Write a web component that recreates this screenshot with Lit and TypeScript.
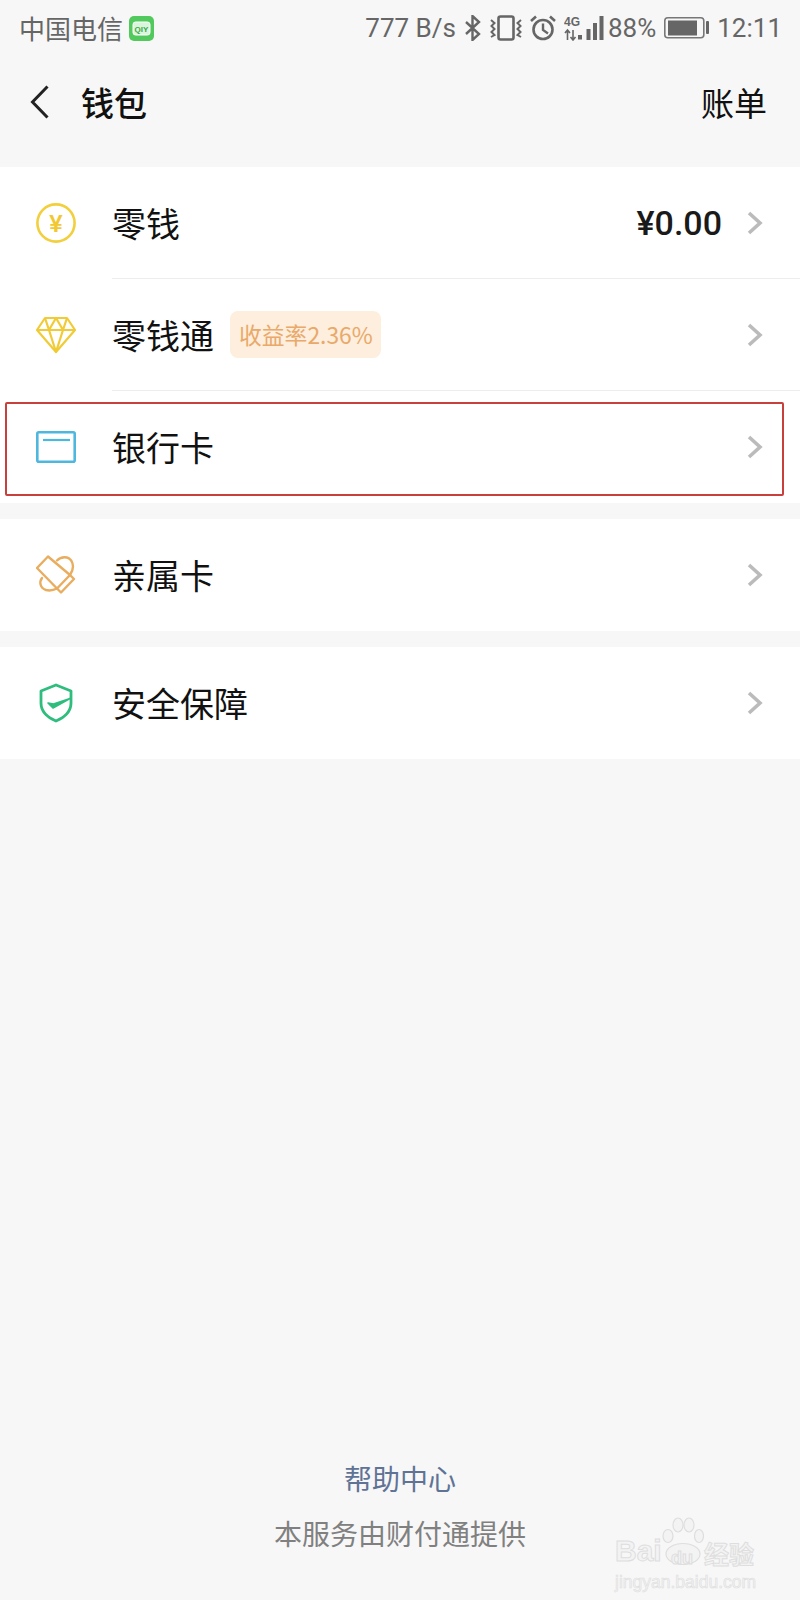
import { css, html, LitElement, nothing, svg } from "lit";
import { customElement } from "lit/decorators.js";

const chevron = html`<svg class="chevron" width="16" height="24" viewBox="0 0 16 24">
  <path d="M2 2l11 10L2 22" fill="none" stroke="#bbb" stroke-width="3.6" />
</svg>`;

const coinIcon = svg`
  <circle cx="20" cy="20" r="18.6" fill="none" stroke="#f2cf3c" stroke-width="2.6" />
  <text x="20" y="28.500" text-anchor="middle" font-family="Liberation Sans, sans-serif" font-weight="700" font-size="24" fill="#f2c832">¥</text>
`;

const diamondIcon = svg`
  <g fill="none" stroke="#f1cb36" stroke-width="2.2" stroke-linejoin="round">
    <path d="M9 2H31L39 14 20 36 1 14Z" />
    <path d="M1 14H39M13 14L20 36 27 14M9 2L13 14 20 2 27 14 31 2" />
  </g>
`;

const cardIcon = svg`
  <rect x="1.3" y="1.3" width="37.4" height="29.4" rx="1.5" fill="none" stroke="#4db7de" stroke-width="2.6" />
  <path d="M7 9H34" stroke="#4db7de" stroke-width="2.2" />
`;

const familyIcon = svg`
  <g fill="none" stroke="#e9ad5f" stroke-width="2.4" stroke-linejoin="round" stroke-linecap="round">
    <path d="M12 1.5L1 13 21 33.500 34 20Z" />
    <path d="M21 33.500L25 37.500 38 24 34 20" />
    <path d="M21 5.500C25 1.500 32 0.500 35.500 6 38 10.500 37 15.500 34 20" />
    <path d="M6 23C3 27 4 33 10 35 14 36 18 35 21 33.500" />
  </g>
`;

const shieldIcon = svg`
  <path d="M17 2L32 8V20C32 29 24 35 17 38 10 35 2 29 2 20V8Z" fill="none" stroke="#2fbd7e" stroke-width="2.8" stroke-linejoin="round" />
  <path d="M9 20L14 25 31 15.500 14.500 21Z" fill="#2fbd7e" stroke="#2fbd7e" stroke-width="1.6" stroke-linejoin="round" />
`;

const rows = [
  [{ icon: coinIcon, w: 40, h: 40, label: "零钱", amount: "¥0.00" },
   { icon: diamondIcon, w: 40, h: 38, label: "零钱通", badge: "收益率2.36%" },
   { icon: cardIcon, w: 40, h: 32, label: "银行卡" }],
  [{ icon: familyIcon, w: 40, h: 40, label: "亲属卡" }],
  [{ icon: shieldIcon, w: 34, h: 40, label: "安全保障" }],
];

@customElement("app-root")
export class AppRoot extends LitElement {
  static override styles = css`
    :host {
      display: block;
      height: 1600px;
      overflow: hidden;
      background: #f7f7f7;
      font-family: "Noto Sans CJK SC", "Liberation Sans", sans-serif;
      color: #111;
    }

    .page {
      position: relative;
      height: 1600px;
      display: flex;
      flex-direction: column;
    }

    .status {
      height: 56px;
      display: flex;
      align-items: center;
      justify-content: space-between;
      padding: 0 18px 0 19px;
      font-size: 26px;
      line-height: 56px;
      color: #666;
    }

    .status-left,
    .status-right {
      display: flex;
      align-items: center;
    }

    .status-left svg {
      margin-left: 6px;
    }

    .num {
      font-family: Roboto, "Liberation Sans", sans-serif;
      font-size: 26px;
    }

    .speed {
      margin-right: 9px;
    }

    .status-right svg {
      display: block;
    }

    .bt {
      margin-right: 9px;
    }

    .vib {
      margin-right: 8px;
    }

    .alarm {
      margin-right: 8px;
    }

    .sig {
      margin-right: 4px;
    }

    .batt {
      margin: 0 8px;
    }

    .header {
      height: 111px;
      box-sizing: border-box;
      display: flex;
      align-items: center;
      padding: 0 33px 19px 30px;
      font-size: 33px;
      line-height: 44px;
    }

    .back {
      margin-right: 32px;
    }

    .title {
      flex: 1;
      font-weight: 500;
    }

    .section {
      background: #fff;
      margin-bottom: 16px;
    }

    .row {
      height: 112px;
      display: flex;
      align-items: center;
    }

    .icon {
      width: 112px;
      flex: none;
      display: flex;
      justify-content: center;
    }

    .body {
      flex: 1;
      height: 100%;
      box-sizing: border-box;
      display: flex;
      align-items: center;
      padding-right: 37px;
      border-bottom: 1px solid #ededed;
    }

    .row:last-child .body {
      border-bottom: none;
    }

    .label {
      font-size: 34px;
      line-height: 44px;
      color: #111;
    }

    .badge {
      margin-left: 16px;
      height: 47px;
      padding: 0 8px 0 9px;
      display: flex;
      align-items: center;
      background: #fdeedd;
      border-radius: 8px;
      color: #e9a96a;
      font-size: 22.800px;
    }

    .amount {
      margin-left: auto;
      font-family: Roboto, "Liberation Sans", sans-serif;
      font-size: 34px;
      font-weight: 500;
      color: #1a1a1a;
    }

    .chevron {
      margin-left: auto;
    }

    .amount + .chevron {
      margin-left: 25px;
    }

    .footer {
      margin-top: auto;
      padding-bottom: 49px;
      display: flex;
      flex-direction: column;
      align-items: center;
      gap: 19px;
      font-size: 28px;
      line-height: 36px;
    }

    .help {
      color: #5f7396;
    }

    .provider {
      color: #808080;
    }

    /* selection box drawn over the bank card row */
    .mark {
      position: absolute;
      left: 5px;
      top: 402px;
      width: 775px;
      height: 90px;
      border: 2.500px solid #c8403c;
      border-radius: 2px;
    }

    .watermark {
      position: absolute;
      left: 615px;
      top: 1517px;
      width: 142px;
      color: #f3f3f3;
      -webkit-text-stroke: 1px #dedede;
      font-family: "Liberation Sans", sans-serif;
    }

    .wm-top {
      position: relative;
      display: flex;
      align-items: flex-end;
      height: 50px;
      font-size: 30px;
      line-height: 32px;
      font-weight: 700;
    }

    .wm-top svg {
      position: absolute;
      left: 47px;
      top: 0;
    }

    .wm-du {
      position: absolute;
      left: 56px;
      top: 31px;
      font-size: 18px;
      line-height: 20px;
    }

    .wm-cn {
      position: absolute;
      left: 89px;
      top: 22px;
      font-family: "Noto Sans CJK SC", sans-serif;
      font-size: 25px;
      line-height: 28px;
    }

    .wm-url {
      margin-top: 5px;
      font-size: 17.500px;
      line-height: 20px;
      white-space: nowrap;
      -webkit-text-stroke: 0.6px #dedede;
    }
  `;

  override render() {
    return html`
      <div class="page">
        <div class="status">
          <div class="status-left">
            <span>中国电信</span>
            <svg width="25" height="25" viewBox="0 0 25 25">
              <rect width="25" height="25" rx="5" fill="#52c95c" />
              <rect x="4" y="6" width="17" height="13" rx="2.500" fill="#d9f5db" stroke="#fff" />
              <text x="12.500" y="16" text-anchor="middle" font-family="Liberation Sans, sans-serif" font-size="8" font-weight="700" fill="#3aa845">QIY</text>
            </svg>
          </div>
          <div class="status-right">
            <span class="num speed">777 B/s</span>
            <svg class="bt" width="16" height="26" viewBox="0 0 16 26">
              <path d="M1 7L14 19 7.500 25V1L14 7 1 19" fill="none" stroke="#666" stroke-width="2.400" />
            </svg>
            <svg class="vib" width="32" height="26" viewBox="0 0 32 26">
              <rect x="8.500" y="1.500" width="15" height="23" rx="2" fill="none" stroke="#666" stroke-width="2.600" />
              <path d="M1 5L4.500 8 1.500 11 4.500 14 1.500 17 4.500 20 1 22M31 5L27.500 8 30.500 11 27.500 14 30.500 17 27.500 20 31 22" fill="none" stroke="#666" stroke-width="2" />
            </svg>
            <svg class="alarm" width="26" height="26" viewBox="0 0 26 26">
              <circle cx="13" cy="14.500" r="9.500" fill="none" stroke="#666" stroke-width="2.600" />
              <path d="M13 8.500V15L18 18.500" fill="none" stroke="#666" stroke-width="2.400" />
              <path d="M1 6L6 1.500M25 6L20 1.500" fill="none" stroke="#666" stroke-width="2.600" />
            </svg>
            <svg class="sig" width="40" height="26" viewBox="0 0 40 26">
              <text x="0" y="11" font-family="Liberation Sans, sans-serif" font-size="12" font-weight="700" fill="#666">4G</text>
              <path d="M3.500 25V15M1 18L3.500 15 6 18M9 15V25M6.500 22L9 25 11.500 22" fill="none" stroke="#666" stroke-width="1.600" />
              <rect x="14" y="20" width="4" height="4.500" fill="#666" />
              <rect x="22.500" y="14" width="4" height="11" fill="#666" />
              <rect x="29" y="8" width="4" height="17" fill="#666" />
              <rect x="35.500" y="1" width="4" height="24" fill="#666" />
            </svg>
            <span class="num">88%</span>
            <svg class="batt" width="45" height="22" viewBox="0 0 45 22">
              <rect x="0.800" y="0.800" width="39" height="20" rx="3" fill="none" stroke="#777" stroke-width="1.600" />
              <rect x="4" y="3.500" width="29" height="15" fill="#666" />
              <rect x="42" y="4" width="3" height="13" rx="1" fill="#666" />
            </svg>
            <span class="num">12:11</span>
          </div>
        </div>

        <div class="header">
          <svg class="back" width="19" height="34" viewBox="0 0 19 34">
            <path d="M17.500 1.500L2.500 17 17.500 32.500" fill="none" stroke="#222" stroke-width="3" />
          </svg>
          <span class="title">钱包</span>
          <span>账单</span>
        </div>

        ${rows.map(
          (group) => html`
            <div class="section">
              ${group.map(
                (r: any) => html`
                  <div class="row">
                    <div class="icon">
                      <svg width=${r.w} height=${r.h} viewBox="0 0 ${r.w} ${r.h}">${r.icon}</svg>
                    </div>
                    <div class="body">
                      <span class="label">${r.label}</span>
                      ${r.badge ? html`<span class="badge">${r.badge}</span>` : nothing}
                      ${r.amount ? html`<span class="amount">${r.amount}</span>` : nothing}
                      ${chevron}
                    </div>
                  </div>
                `
              )}
            </div>
          `
        )}

        <div class="footer">
          <span class="help">帮助中心</span>
          <span class="provider">本服务由财付通提供</span>
        </div>

        <div class="mark"></div>

        <div class="watermark">
          <div class="wm-top">
            <span>Bai</span>
            <svg width="42" height="48" viewBox="0 0 42 48">
              <g fill="#f3f3f3" stroke="#dedede" stroke-width="1.200">
                <ellipse cx="6" cy="19" rx="5" ry="6.500" />
                <ellipse cx="16" cy="8" rx="5" ry="7" />
                <ellipse cx="27" cy="8" rx="5" ry="7" />
                <ellipse cx="37" cy="19" rx="4.500" ry="6.500" />
                <ellipse cx="21" cy="37" rx="17" ry="10.500" />
              </g>
            </svg>
            <span class="wm-du">du</span>
            <span class="wm-cn">经验</span>
          </div>
          <div class="wm-url">jingyan.baidu.com</div>
        </div>
      </div>
    `;
  }
}
